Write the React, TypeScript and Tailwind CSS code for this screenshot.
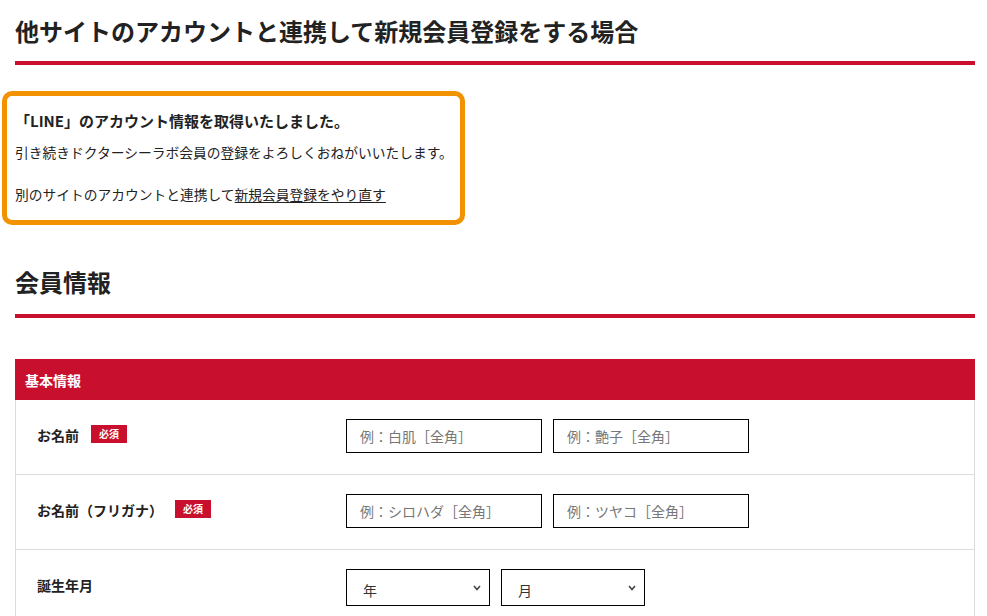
import React from "react";

const font = { fontFamily: '"Noto Sans CJK JP", "Noto Sans", sans-serif' };

function Badge() {
  return (
    <span className="inline-flex h-[18px] w-[36px] items-center justify-center bg-[#c8102e] text-[10px] font-bold leading-none text-white">
      必須
    </span>
  );
}

function TextInput({ placeholder }: { placeholder: string }) {
  return (
    <input
      type="text"
      placeholder={placeholder}
      className="h-[34px] w-[196px] border border-black bg-white px-[13px] text-sm text-gray-800 placeholder:text-[#777]"
    />
  );
}

function Select({ label }: { label: string }) {
  return (
    <div className="relative h-[37px] w-[144px]">
      <select className="h-full w-full appearance-none rounded-none border border-black bg-white pl-4 pt-1 text-sm text-[#333]">
        <option>{label}</option>
      </select>
      <svg
        className="pointer-events-none absolute right-[9px] top-[16px]"
        width="8"
        height="6"
        viewBox="0 0 8 6"
        fill="none"
      >
        <path d="M1 1l3 3.5L7 1" stroke="#444" strokeWidth="1.6" />
      </svg>
    </div>
  );
}

function Row({
  label,
  required,
  children,
  last,
}: {
  label: string;
  required?: boolean;
  children: React.ReactNode;
  last?: boolean;
}) {
  return (
    <div
      className={`flex border-x border-[#dcdcdc] ${last ? "" : "border-b"} h-[75px]`}
    >
      <div className="flex w-[330px] shrink-0 items-start gap-[12px] pl-[21px] pt-[25px]">
        <span className="text-sm font-bold text-[#222]">{label}</span>
        {required && <Badge />}
      </div>
      <div className="flex items-start gap-[11px] pt-[19px]">{children}</div>
    </div>
  );
}

export default function App() {
  return (
    <div className="min-h-[616px] overflow-hidden bg-white text-[#222]" style={font}>
      <div className="px-[15px] pt-[14px]">
        <h1 className="text-2xl font-bold leading-[34px]">
          他サイトのアカウントと連携して新規会員登録をする場合
        </h1>
        <div className="mt-[13px] h-[4px] w-[960px] bg-[#c8102e]" />
      </div>

      <div className="ml-[2px] mt-[26px] w-[463px] rounded-[10px] border-[5px] border-[#f39200] pb-[15px] pl-[8px] pr-[2px] pt-[13px]">
        <p className="text-[15px] font-bold leading-6">
          「LINE」のアカウント情報を取得いたしました。
        </p>
        <p className="mt-[8px] whitespace-nowrap text-[13.75px] leading-[22px]">
          引き続きドクターシーラボ会員の登録をよろしくおねがいいたします。
        </p>
        <p className="mt-[20px] whitespace-nowrap text-[13.75px] leading-[22px]">
          別のサイトのアカウントと連携して
          <a href="#" className="underline underline-offset-2">
            新規会員登録をやり直す
          </a>
        </p>
      </div>

      <div className="px-[15px] pt-[40px]">
        <h2 className="text-2xl font-bold leading-[34px]">会員情報</h2>
        <div className="mt-[15px] h-[4px] w-[960px] bg-[#c8102e]" />
      </div>

      <div className="ml-[15px] mt-[41px] w-[960px]">
        <div className="flex h-[41px] items-center bg-[#c8102e] px-[10px] text-sm font-bold text-white">
          基本情報
        </div>
        <Row label="お名前" required>
          <TextInput placeholder="例：白肌［全角］" />
          <TextInput placeholder="例：艶子［全角］" />
        </Row>
        <Row label="お名前（フリガナ）" required>
          <TextInput placeholder="例：シロハダ［全角］" />
          <TextInput placeholder="例：ツヤコ［全角］" />
        </Row>
        <Row label="誕生年月" last>
          <Select label="年" />
          <Select label="月" />
        </Row>
      </div>
    </div>
  );
}
